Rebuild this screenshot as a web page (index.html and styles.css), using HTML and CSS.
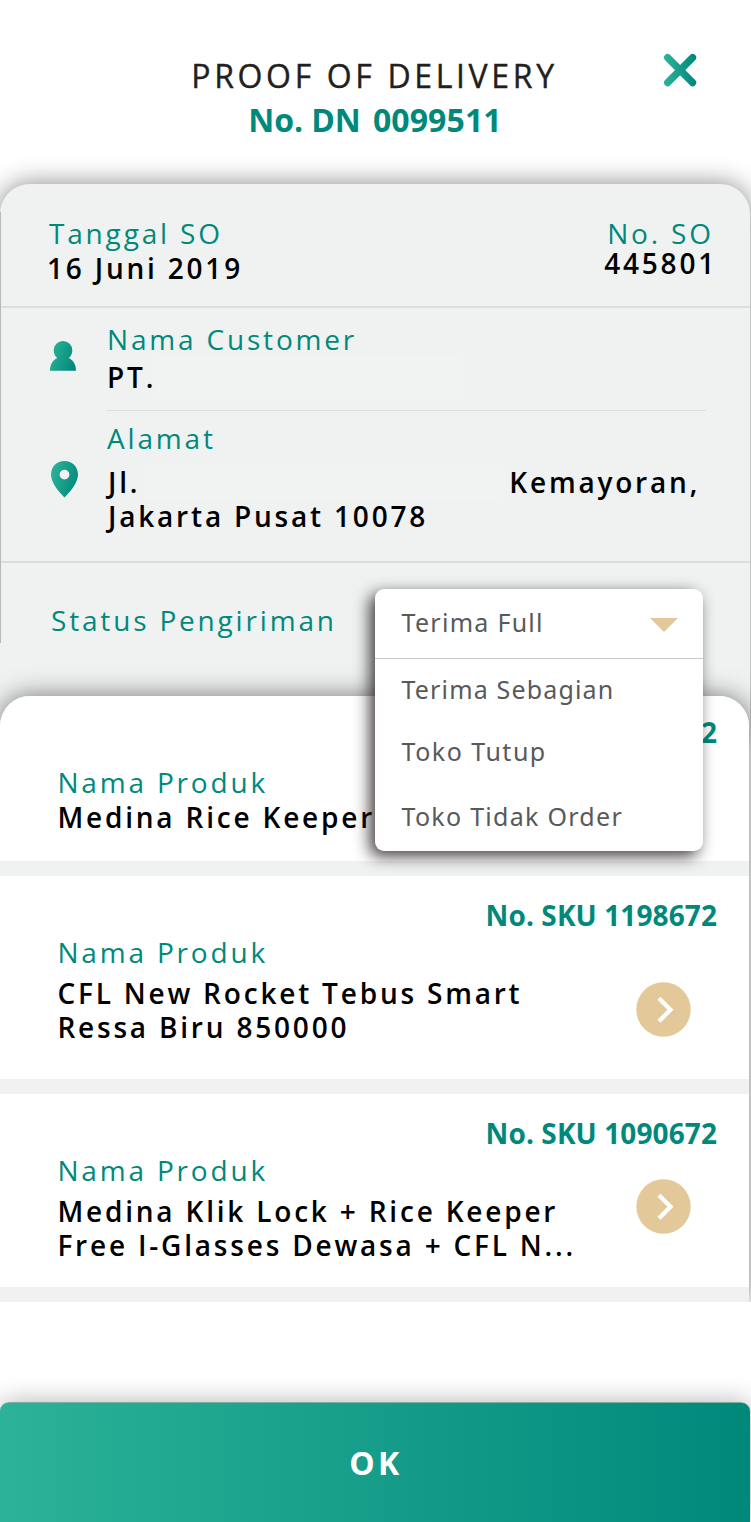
FILE: index.html
```
<!DOCTYPE html>
<html lang="id">
<head>
<meta charset="utf-8">
<title>Proof of Delivery</title>
<link rel="stylesheet" href="styles.css">
</head>
<body>
<main class="screen">
  <header class="header">
    <h1 class="title">PROOF OF DELIVERY</h1>
    <p class="dn">No. DN <span class="dn-number">0099511</span></p>
    <button class="close" aria-label="Tutup">
      <svg width="34" height="34" viewBox="0 0 34 34">
        <defs><linearGradient id="gx" gradientUnits="userSpaceOnUse" x1="2" y1="0" x2="32" y2="0"><stop offset="0" stop-color="#2bb298"/><stop offset="1" stop-color="#00897b"/></linearGradient></defs>
        <path d="M4.600 4.600 29.600 29.600M29.600 4.600 4.600 29.600" fill="none" stroke="url(#gx)" stroke-width="7.200" stroke-linecap="round"/>
      </svg>
    </button>
  </header>

  <section class="order">
    <div class="order-head">
      <div class="order-date">
        <p class="label">Tanggal SO</p>
        <p class="value">16 Juni 2019</p>
      </div>
      <div class="order-number">
        <p class="label">No. SO</p>
        <p class="value">445801</p>
      </div>
    </div>

    <div class="details">
      <div class="detail customer">
        <svg class="icon-person" width="26" height="30" viewBox="0 0 26 30">
          <defs><linearGradient id="gp" x1="0" y1=".3" x2="1" y2=".7"><stop offset="0" stop-color="#2bb298"/><stop offset="1" stop-color="#00897b"/></linearGradient></defs>
          <path d="M13 0a9.300 9.300 0 0 1 9.300 9.400c0 3.300-1.500 6-3.700 7.700C23.200 19 26 23.500 26 29.800H0C0 23.500 2.800 19 7.400 17.100 5.200 15.400 3.700 12.700 3.700 9.400A9.300 9.300 0 0 1 13 0Z" fill="url(#gp)"/>
        </svg>
        <div class="detail-body">
          <p class="label">Nama Customer</p>
          <p class="value line">PT.<span class="mask mask-name"></span></p>
        </div>
      </div>
      <div class="detail address">
        <svg class="icon-pin" width="27" height="37" viewBox="0 0 27 37">
          <path fill-rule="evenodd" d="M13.500 0C21.200 0 27 5.800 27 13.600 27 21.500 19.600 30.500 13.500 36.600 7.400 30.500 0 21.500 0 13.600 0 5.800 5.800 0 13.500 0Zm0 8.700a4.900 4.900 0 1 0 0 9.800 4.900 4.900 0 0 0 0-9.800Z" fill="url(#gp)"/>
        </svg>
        <div class="detail-body">
          <p class="label">Alamat</p>
          <p class="value line">Jl.<span class="mask mask-street"></span>Kemayoran,</p>
          <p class="value">Jakarta Pusat 10078</p>
        </div>
      </div>
    </div>

    <div class="status">
      <p class="label">Status Pengiriman</p>
      <div class="dropdown">
        <div class="dropdown-current">
          <span>Terima Full</span>
          <svg width="28" height="14" viewBox="0 0 28 14"><path d="M0 0h28L14 14Z" fill="#e3c899"/></svg>
        </div>
        <ul class="dropdown-list">
          <li class="partial">Terima Sebagian</li>
          <li class="closed">Toko Tutup</li>
          <li>Toko Tidak Order</li>
        </ul>
      </div>
    </div>
  </section>

  <section class="products">
    <article class="product product-first">
      <p class="sku">No. SKU 1198672</p>
      <div class="product-row">
        <div>
          <p class="label">Nama Produk</p>
          <p class="value">Medina Rice Keeper</p>
        </div>
      </div>
    </article>
    <article class="product product-second">
      <p class="sku">No. SKU 1198672</p>
      <div class="product-row">
        <div>
          <p class="label">Nama Produk</p>
          <p class="value">CFL New Rocket Tebus Smart<br>Ressa Biru 850000</p>
        </div>
        <button class="go" aria-label="Detail">
          <svg width="55" height="55" viewBox="0 0 55 55"><circle cx="27.500" cy="27.500" r="27.200" fill="#e3c899"/><path d="M23 16.200 34.500 27.700 23 39.200" fill="none" stroke="#fff" stroke-width="4.300"/></svg>
        </button>
      </div>
    </article>
    <article class="product product-third">
      <p class="sku">No. SKU 1090672</p>
      <div class="product-row">
        <div>
          <p class="label">Nama Produk</p>
          <p class="value">Medina Klik Lock + Rice Keeper<br>Free I-Glasses Dewasa + CFL N...</p>
        </div>
        <button class="go" aria-label="Detail">
          <svg width="55" height="55" viewBox="0 0 55 55"><circle cx="27.500" cy="27.500" r="27.200" fill="#e3c899"/><path d="M23 16.200 34.500 27.700 23 39.200" fill="none" stroke="#fff" stroke-width="4.300"/></svg>
        </button>
      </div>
    </article>
  </section>

  <footer class="footer">
    <button class="ok">OK</button>
  </footer>
</main>
</body>
</html>
```
FILE: styles.css
```
* { box-sizing: border-box; }
body { margin: 0; background: #fff; }
p, h1, ul { margin: 0; padding: 0; }
ul { list-style: none; }
button { border: 0; padding: 0; background: none; display: block; }
svg { display: block; }

.screen {
  width: 751px;
  height: 1522px;
  display: flex;
  flex-direction: column;
  overflow: hidden;
  font-family: "Open Sans", "Noto Sans", sans-serif;
  font-size: 28px;
  line-height: 34px;
}

.label { color: #00897b; letter-spacing: 2.82px; white-space: nowrap; }
.value { color: #000; font-weight: 600; letter-spacing: 2.8px; white-space: nowrap; }

.header { position: relative; height: 184px; padding-top: 54px; text-align: center; flex: none; }
.title { font-size: 32px; line-height: 44px; font-weight: 400; letter-spacing: 3.640px; padding-right: 2px; color: #231f20; -webkit-text-stroke: .4px #231f20; }
.dn { font-size: 32px; line-height: 44px; font-weight: 700; letter-spacing: -.1px; color: #00897b; padding-right: 1px; }
.dn-number { margin-left: 4px; letter-spacing: .1px; }
.close { position: absolute; left: 663px; top: 53px; }

.order {
  position: relative;
  width: 750px;
  flex: none;
  height: 546px;
  background: #f0f2f2;
  border-radius: 30px 30px 0 0;
  box-shadow: 0 0 26px rgba(0, 0, 0, .48);
}
.order::before {
  content: "";
  position: absolute;
  left: 0;
  top: 28px;
  width: 1px;
  height: 431px;
  background: #b9bbbb;
}
.order-head {
  display: flex;
  justify-content: space-between;
  height: 124px;
  padding: 32px 33px 0 49px;
  border-bottom: 2px solid #dcdedd;
}
.order-date .value { margin: 1px 0 0 -2px; }
.order-number .value { margin-top: -4px; margin-left: -3px; }

.details { padding-left: 50px; height: 255px; border-bottom: 2px solid #dcdedd; }
.detail { display: flex; }
.detail-body { margin-left: auto; width: 643px; }
.customer { padding-top: 14px; }
.customer .detail-body { padding-bottom: 16px; border-bottom: 1px solid #dcdfde; width: 599px; margin: 0 44px 0 auto; }
.customer .value { margin-top: 4px; }
.icon-person { margin-top: 19px; }
.address { padding-top: 10px; }
.address .label { margin-bottom: 10px; }
.address .value { padding-left: 1px; }
.icon-pin { margin: 39.500px 0 0 1px; }
.line { display: flex; height: 34px; }
.mask { background: #f1f3f3; flex: none; }
.mask-name { width: 304px; height: 44px; margin: -4px 0 0 2px; }
.mask-street { width: 358px; height: 34px; margin: 0 7px 0 4px; }

.status { position: relative; padding: 40px 0 0 51px; }
.dropdown {
  position: absolute;
  z-index: 3;
  left: 375px;
  top: 25.500px;
  width: 328px;
  height: 262.500px;
  background: #fff;
  border-radius: 9px;
  box-shadow: -5px 5px 16px rgba(30, 24, 24, .85);
  font-family: "Noto Sans", "Open Sans", sans-serif;
  font-size: 25px;
  letter-spacing: 1.28px;
  color: #58595b;
}
.dropdown-current {
  display: flex;
  justify-content: space-between;
  height: 70px;
  padding: 16px 25.500px 0 26.500px;
  border-bottom: 1px solid #c9caca;
}
.dropdown-current svg { margin-top: 13px; }
.dropdown-list { display: grid; grid-template-rows: 62px 65px 34px; padding: 13.500px 0 0 26.500px; }
.partial { letter-spacing: 1.16px; }
.closed { letter-spacing: 1.5px; }

.products {
  position: relative;
  z-index: 1;
  width: 749px;
  height: 606px;
  margin-top: -34px;
  flex: none;
  background: #f0f2f2;
  border-radius: 30px 30px 0 0;
  box-shadow: 0 0 26px rgba(0, 0, 0, .52);
  clip-path: inset(-40px -2px 0 0);
}
.product { background: #fff; }
.product-first { height: 164.500px; padding-top: 19px; border-radius: 30px 30px 0 0; }
.product-second { height: 202.500px; padding-top: 22px; margin-top: 15.500px; }
.product-third { height: 193px; padding-top: 22px; margin-top: 15.500px; }
.sku { text-align: right; font-weight: 700; letter-spacing: .1px; color: #00897b; padding-right: 32px; }
.product-row { display: flex; justify-content: space-between; padding: 3px 58.500px 0 57.400px; }
.product-first .product-row { padding-top: 16px; }
.product-first .value { margin-top: 1px; }
.product-second .value, .product-third .value { margin-top: 7px; }
.product-second .go { margin-top: 46.500px; }
.product-third .go { margin-top: 26px; }
.go { height: 55px; }

.footer { margin-top: auto; flex: none; }
.ok {
  width: 750px;
  height: 120px;
  padding-left: 2px;
  border-top: 1px solid #7fae9f;
  border-radius: 9px 9px 0 0;
  background: linear-gradient(90deg, #2bb298, #00897b);
  box-shadow: 0 0 26px rgba(0, 0, 0, .3);
  color: #fff;
  font: 700 32px/44px "Open Sans", sans-serif;
  letter-spacing: 3.5px;
}
```
